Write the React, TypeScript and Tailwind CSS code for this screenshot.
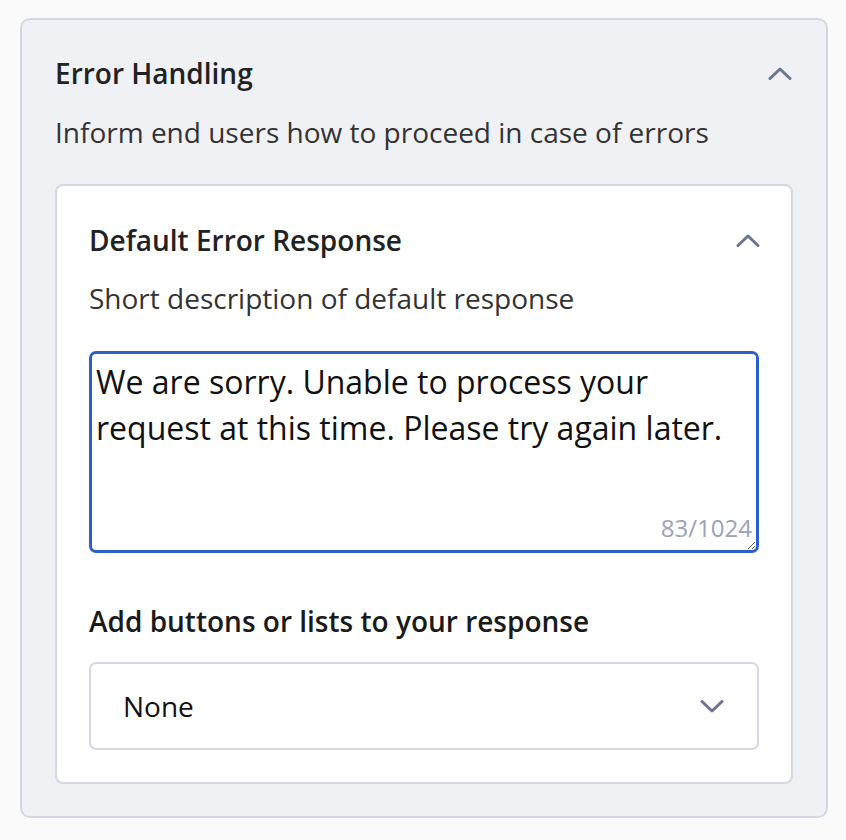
import { useState } from "react";

function Chevron({ up = false }: { up?: boolean }) {
  return (
    <svg width="24" height="13" viewBox="0 0 24 13" fill="none" className="text-[#6d7394]">
      <path
        d={up ? "M2 11.5L12 2L22 11.5" : "M2 1.5L12 11L22 1.5"}
        stroke="currentColor"
        strokeWidth="3"
        strokeLinecap="round"
        strokeLinejoin="round"
      />
    </svg>
  );
}

export default function App() {
  const [message, setMessage] = useState(
    "We are sorry. Unable to process your request at this time. Please try again later. "
  );

  return (
    <div
      className="min-h-[840px] w-[846px] bg-[#fafafb] pt-[18px] pr-[18px] pb-[22px] pl-[20px]"
      style={{ fontFamily: '"Open Sans", "Noto Sans", sans-serif' }}
    >
      <section className="rounded-[10px] border-2 border-[#d5d6e3] bg-[#f0f1f5] px-[33px] pt-[34px] pb-[32px]">
        <div className="flex items-center justify-between">
          <h2 className="text-[28px] leading-[38px] font-semibold text-[#222]">Error Handling</h2>
          <span className="mr-[1px]">
            <Chevron up />
          </span>
        </div>
        <p className="mt-[21px] text-[28px] leading-[38px] text-[#333]">
          Inform end users how to proceed in case of errors
        </p>

        <div className="mt-[33px] rounded-[8px] border-2 border-[#d5d7e3] bg-white px-[32px] pt-[35px] pb-[32px]">
          <div className="flex items-center justify-between">
            <h3 className="text-[28px] leading-[38px] font-semibold text-[#222]">Default Error Response</h3>
            <span className="mr-[-1px]">
              <Chevron up />
            </span>
          </div>
          <p className="mt-[20px] text-[28px] leading-[38px] text-[#333]">
            Short description of default response
          </p>

          <div className="relative mt-[34px]">
            <textarea
              value={message}
              onChange={(event) => setMessage(event.target.value)}
              className="block h-[202px] w-full rounded-[7px] border-[3px] border-[#2d5fc8] bg-white pt-[5px] pr-[10px] pl-[4px] text-[32px] leading-[46px] text-[#111] outline-none"
            />
            <span className="pointer-events-none absolute right-[7px] bottom-[9px] text-[24px] leading-[32px] text-[#9aa2bc]">
              {message.length}/1024
            </span>
          </div>

          <label className="mt-[49px] block text-[28px] leading-[38px] font-semibold text-[#1a1a1a]">
            Add buttons or lists to your response
          </label>
          <div className="mt-[22px] flex h-[88px] items-center justify-between rounded-[7px] border-2 border-[#d5d7e3] bg-white pr-[33px] pl-[32px]">
            <span className="text-[28px] leading-[38px] text-[#111]">None</span>
            <Chevron />
          </div>
        </div>
      </section>
    </div>
  );
}
